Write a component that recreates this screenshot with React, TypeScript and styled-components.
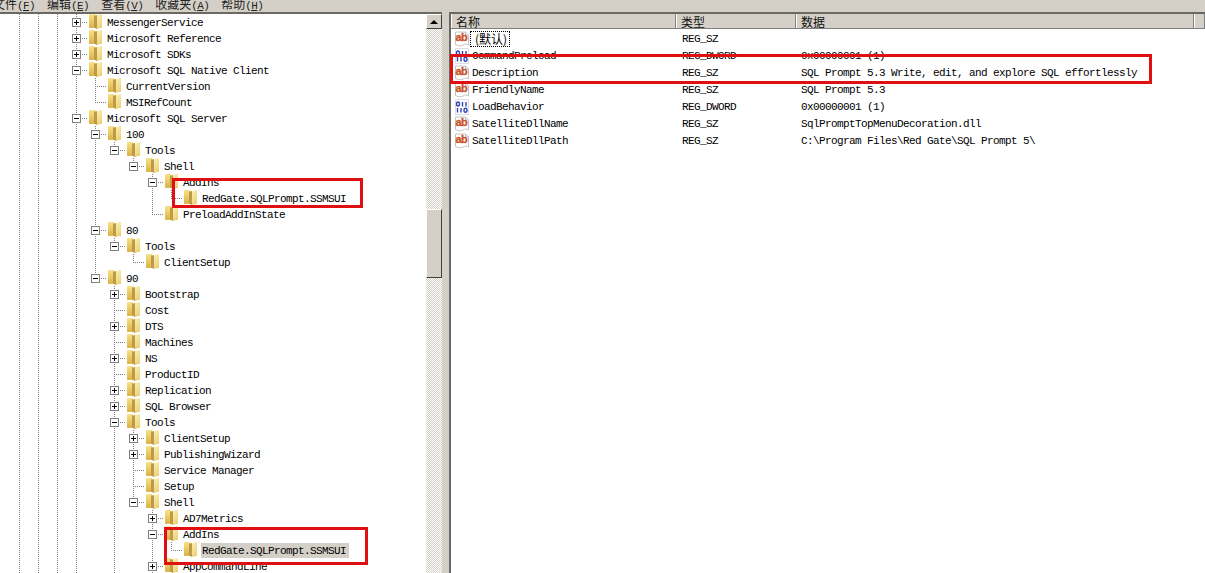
import React from "react";
import styled, { createGlobalStyle } from "styled-components";

const TEXT_FONT = `"Liberation Mono", "DejaVu Sans Mono", monospace`;
const CJK_FONT = `"Noto Sans CJK SC", "Liberation Sans", sans-serif`;
const FACE = "#d4d0c8";
const DOT = "#808080";

type Node = [number, "plus" | "minus" | "leaf", string, boolean?];

const treeRows: Node[] = [
  [0, "plus", "MessengerService"],
  [0, "plus", "Microsoft Reference"],
  [0, "plus", "Microsoft SDKs"],
  [0, "minus", "Microsoft SQL Native Client"],
  [1, "leaf", "CurrentVersion"],
  [1, "leaf", "MSIRefCount"],
  [0, "minus", "Microsoft SQL Server"],
  [1, "minus", "100"],
  [2, "minus", "Tools"],
  [3, "minus", "Shell"],
  [4, "minus", "AddIns"],
  [5, "leaf", "RedGate.SQLPrompt.SSMSUI"],
  [4, "leaf", "PreloadAddInState"],
  [1, "minus", "80"],
  [2, "minus", "Tools"],
  [3, "leaf", "ClientSetup"],
  [1, "minus", "90"],
  [2, "plus", "Bootstrap"],
  [2, "leaf", "Cost"],
  [2, "plus", "DTS"],
  [2, "leaf", "Machines"],
  [2, "plus", "NS"],
  [2, "leaf", "ProductID"],
  [2, "plus", "Replication"],
  [2, "plus", "SQL Browser"],
  [2, "minus", "Tools"],
  [3, "plus", "ClientSetup"],
  [3, "plus", "PublishingWizard"],
  [3, "leaf", "Service Manager"],
  [3, "leaf", "Setup"],
  [3, "minus", "Shell"],
  [4, "plus", "AD7Metrics"],
  [4, "minus", "AddIns"],
  [5, "leaf", "RedGate.SQLPrompt.SSMSUI", true],
  [4, "plus", "AppCommandLine"],
];

// depths of the nodes that continue below the visible part of the tree
const belowFold = [4, 2, 0];

const hasNext = (index: number, depth: number) => {
  const after = [...treeRows.slice(index + 1).map((r) => r[0]), ...belowFold];
  const next = after.find((d) => d <= depth);
  return next === depth;
};

const values = [
  { kind: "ab", name: "", type: "REG_SZ", data: "" },
  { kind: "bin", name: "CommandPreload", type: "REG_DWORD", data: "0x00000001 (1)" },
  { kind: "ab", name: "Description", type: "REG_SZ", data: "SQL Prompt 5.3 Write, edit, and explore SQL effortlessly" },
  { kind: "ab", name: "FriendlyName", type: "REG_SZ", data: "SQL Prompt 5.3" },
  { kind: "bin", name: "LoadBehavior", type: "REG_DWORD", data: "0x00000001 (1)" },
  { kind: "ab", name: "SatelliteDllName", type: "REG_SZ", data: "SqlPromptTopMenuDecoration.dll" },
  { kind: "ab", name: "SatelliteDllPath", type: "REG_SZ", data: "C:\\Program Files\\Red Gate\\SQL Prompt 5\\" },
];

const menus = [
  ["文件", "F"],
  ["编辑", "E"],
  ["查看", "V"],
  ["收藏夹", "A"],
  ["帮助", "H"],
];

const FolderIcon = () => (
  <FolderSvg viewBox="0 0 16 17">
    <path d="M1 3q0-2 2-2h3l2 2h5q1 0 1 1v10q0 1-1 1H2q-1 0-1-1z" fill="#e3c25e" />
    <path d="M1 3q0-2 2-2h2q1 0 1 1v12l-4 1q-1 0-1-1z" fill="url(#folderLeft)" />
    <path d="M6 3l3-1v14l-3-1.500z" fill="#bd9b48" />
    <path d="M9 3q0-1 1-1.300l3-.7q1 0 1 1v11q0 1-1 1.300l-3 1.700q-1 .3-1-.7z" fill="url(#folderRight)" />
  </FolderSvg>
);

const FolderGradients = () => (
  <GradientDefs>
    <defs>
      <linearGradient id="folderLeft" x1="0" y1="0" x2="0" y2="1">
        <stop offset="0" stopColor="#f7e487" />
        <stop offset="1" stopColor="#dcb044" />
      </linearGradient>
      <linearGradient id="folderRight" x1="0" y1="0" x2="0.4" y2="1">
        <stop offset="0" stopColor="#fbf1b4" />
        <stop offset="1" stopColor="#eed27a" />
      </linearGradient>
    </defs>
  </GradientDefs>
);

const AbIcon = () => (
  <IconSvg viewBox="0 0 16 16">
    <path d="M1.500 1h10l3 3v10c-2-1.500-3.500-1-5.500 0s-5 1-7.500-.5z" fill="#fff" stroke="#c4c4c4" />
    <path d="M11.500 1v3h3" fill="none" stroke="#c4c4c4" />
    <text
      x="1.500"
      y="10"
      fontFamily="Liberation Sans, sans-serif"
      fontWeight="700"
      fontSize="11"
      fill="#c9512a"
      stroke="#c9512a"
      strokeWidth="0.3"
    >
      ab
    </text>
  </IconSvg>
);

const BinaryIcon = () => (
  <IconSvg viewBox="0 0 16 16">
    <path d="M1.500 .500h13v15h-13z" fill="#fff" stroke="#dcdce6" />
    <g fill="none" stroke="#2f45b4" strokeWidth="1.400">
      <ellipse cx="4" cy="5" rx="1.500" ry="2" />
      <path d="M8.500 3v4.500M12 3v4.500" />
      <path d="M3.500 9v4.500M7 9v4.500" />
      <ellipse cx="11.500" cy="11.300" rx="1.500" ry="2" />
    </g>
  </IconSvg>
);

export default function App() {
  return (
    <Page>
      <GlobalStyle />
      <FolderGradients />
      <MenuBar>
        {menus.map(([label, key]) => (
          <MenuItem key={key}>
            {label}
            <MenuKey>
              (<u>{key}</u>)
            </MenuKey>
          </MenuItem>
        ))}
      </MenuBar>
      <Main>
        <TreePane>
          <Tree>
            {treeRows.map(([depth, state, label, selected], i) => (
              <TreeRow key={i}>
                {[0, 1, 2].map((c) => (
                  <Guide key={c} $line />
                ))}
                {Array.from({ length: depth }, (_, a) => (
                  <Guide key={a} $line={hasNext(i, a)} />
                ))}
                <Connector $down={hasNext(i, depth)}>
                  {state !== "leaf" && <Expander $plus={state === "plus"} />}
                </Connector>
                <FolderIcon />
                <TreeLabel $selected={selected}>{label}</TreeLabel>
              </TreeRow>
            ))}
          </Tree>
          <ScrollBar>
            <ScrollButton>
              <UpArrow />
            </ScrollButton>
            <ScrollThumb />
          </ScrollBar>
        </TreePane>
        <Splitter />
        <ValuesPane>
          <HeaderRow>
            <HeaderCell>名称</HeaderCell>
            <HeaderCell>类型</HeaderCell>
            <HeaderCell>数据</HeaderCell>
            <HeaderCell />
          </HeaderRow>
          <ValueList>
            {values.map((v, i) => (
              <ValueRow key={i}>
                <NameCell>
                  {v.kind === "ab" ? <AbIcon /> : <BinaryIcon />}
                  {v.name ? <ValueName>{v.name}</ValueName> : <DefaultName>(默认)</DefaultName>}
                </NameCell>
                <TypeCell>{v.type}</TypeCell>
                <DataCell>{v.data}</DataCell>
              </ValueRow>
            ))}
          </ValueList>
        </ValuesPane>
      </Main>
      <RedBox $x={172} $y={178} $w={191} $h={30} />
      <RedBox $x={164} $y={527} $w={204} $h={38} />
      <RedBox $x={450} $y={54} $w={702} $h={30} />
    </Page>
  );
}

const GlobalStyle = createGlobalStyle`
  html, body {
    margin: 0;
    height: 100%;
    overflow: hidden;
    background: #fff;
  }
`;

const Page = styled.div`
  position: relative;
  width: 1205px;
  height: 573px;
  overflow: hidden;
  display: flex;
  flex-direction: column;
  font-family: ${TEXT_FONT};
  font-size: 11px;
  letter-spacing: -0.6px;
  color: #000;
  background: ${FACE};
`;

const GradientDefs = styled.svg`
  width: 0;
  height: 0;
  flex: none;
`;

const MenuBar = styled.div`
  height: 12px;
  flex: none;
  display: flex;
  align-items: flex-end;
  gap: 12px;
  margin-left: -7px;
  overflow: hidden;
  background: ${FACE};
`;

const MenuItem = styled.span`
  font-family: ${CJK_FONT};
  font-size: 12px;
  letter-spacing: 0;
  line-height: 16px;
  margin-bottom: -2px;
  white-space: nowrap;
  color: #222;
`;

const MenuKey = styled.span`
  font-family: ${TEXT_FONT};
  font-size: 11px;
  letter-spacing: -0.6px;
`;

const Main = styled.div`
  flex: 1;
  display: flex;
  min-height: 0;
`;

const TreePane = styled.div`
  width: 442px;
  flex: none;
  display: flex;
  border-top: 2px solid #6b6964;
  background: #fff;
  overflow: hidden;
`;

const Tree = styled.div`
  flex: 1;
  padding-left: 10px;
  overflow: hidden;
`;

const TreeRow = styled.div`
  display: flex;
  align-items: center;
  height: 16px;
  white-space: nowrap;
`;

const dots = (dir: string) =>
  `repeating-linear-gradient(${dir}, ${DOT} 0 1px, transparent 1px 2px)`;

const Guide = styled.span<{ $line?: boolean }>`
  width: 19px;
  height: 16px;
  flex: none;
  background: ${(p) => (p.$line ? dots("to bottom") : "none")} no-repeat 9px 0 / 1px 100%;
`;

const Connector = styled.span<{ $down?: boolean }>`
  width: 21px;
  height: 16px;
  flex: none;
  padding-left: 5px;
  box-sizing: border-box;
  display: flex;
  align-items: center;
  background:
    ${dots("to bottom")} no-repeat 9px 0 / 1px ${(p) => (p.$down ? "100%" : "50%")},
    ${dots("to right")} no-repeat 9px 8px / 12px 1px;
`;

const Expander = styled.span<{ $plus?: boolean }>`
  width: 9px;
  height: 9px;
  box-sizing: border-box;
  border: 1px solid #808080;
  background:
    linear-gradient(#000, #000) no-repeat center / 5px 1px,
    ${(p) => (p.$plus ? "linear-gradient(#000, #000) no-repeat center / 1px 5px," : "")}
    #fff;
`;

const FolderSvg = styled.svg`
  width: 16px;
  height: 17px;
  flex: none;
  display: block;
  margin-top: -1px;
`;

const TreeLabel = styled.span<{ $selected?: boolean }>`
  margin-left: ${(p) => (p.$selected ? "2px" : "3px")};
  padding: ${(p) => (p.$selected ? "0 3px 0 1px" : "0")};
  height: 15px;
  line-height: 17px;
  background: ${(p) => (p.$selected ? FACE : "transparent")};
`;

const ScrollBar = styled.div`
  width: 16px;
  flex: none;
  display: flex;
  flex-direction: column;
  background: repeating-conic-gradient(${FACE} 0 25%, #fff 0 50%) 0 0 / 2px 2px;
`;

const ScrollButton = styled.div`
  height: 15px;
  flex: none;
  box-sizing: border-box;
  display: flex;
  align-items: center;
  justify-content: center;
  background: ${FACE};
  border-top: 1px solid #fff;
  border-left: 1px solid #fff;
  border-right: 1px solid #404040;
  border-bottom: 1px solid #404040;
`;

const UpArrow = styled.span`
  width: 0;
  height: 0;
  border-left: 4px solid transparent;
  border-right: 4px solid transparent;
  border-bottom: 4px solid #000;
`;

const ScrollThumb = styled.div`
  height: 69px;
  margin-top: 180px;
  flex: none;
  box-sizing: border-box;
  background: ${FACE};
  border-top: 1px solid #fff;
  border-left: 1px solid #fff;
  border-right: 1px solid #404040;
  border-bottom: 1px solid #404040;
`;

const Splitter = styled.div`
  width: 7px;
  flex: none;
  background: ${FACE};
`;

const ValuesPane = styled.div`
  flex: 1;
  min-width: 0;
  border-top: 2px solid #6b6964;
  border-left: 2px solid #6b6964;
  background: #fff;
`;

const columns = "225px 120px 398px 1fr";

const HeaderRow = styled.div`
  display: grid;
  grid-template-columns: ${columns};
  height: 15px;
  box-sizing: border-box;
  border-bottom: 1px solid #808080;
  background: ${FACE};
`;

const HeaderCell = styled.div`
  font-family: ${CJK_FONT};
  font-size: 12px;
  letter-spacing: 0;
  line-height: 15px;
  padding-left: 5px;
  box-sizing: border-box;
  border-right: 1px solid #808080;
  box-shadow: inset 1px 0 0 #fff;
  color: #111;
  overflow: hidden;
`;

const ValueList = styled.div`
  padding-top: 1px;
`;

const ValueRow = styled.div`
  display: grid;
  grid-template-columns: ${columns};
  height: 17px;
  line-height: 19px;
  white-space: nowrap;
`;

const NameCell = styled.div`
  display: flex;
  align-items: center;
  height: 17px;
  padding-left: 3px;
`;

const IconSvg = styled.svg`
  width: 16px;
  height: 16px;
  flex: none;
  display: block;
`;

const ValueName = styled.span`
  margin-left: 2px;
  padding-top: 2px;
`;

const DefaultName = styled.span`
  box-sizing: border-box;
  height: 16px;
  padding: 0 2px 0 4px;
  line-height: 14px;
  border: 1px dotted #000;
  font-family: ${CJK_FONT};
  font-size: 12px;
  letter-spacing: 0;
`;

const TypeCell = styled.div`
  padding-left: 6px;
`;

const DataCell = styled.div`
  padding-left: 5px;
`;

const RedBox = styled.div<{ $x: number; $y: number; $w: number; $h: number }>`
  position: absolute;
  left: ${(p) => p.$x}px;
  top: ${(p) => p.$y}px;
  width: ${(p) => p.$w}px;
  height: ${(p) => p.$h}px;
  box-sizing: border-box;
  border: 3px solid #e00f10;
`;
